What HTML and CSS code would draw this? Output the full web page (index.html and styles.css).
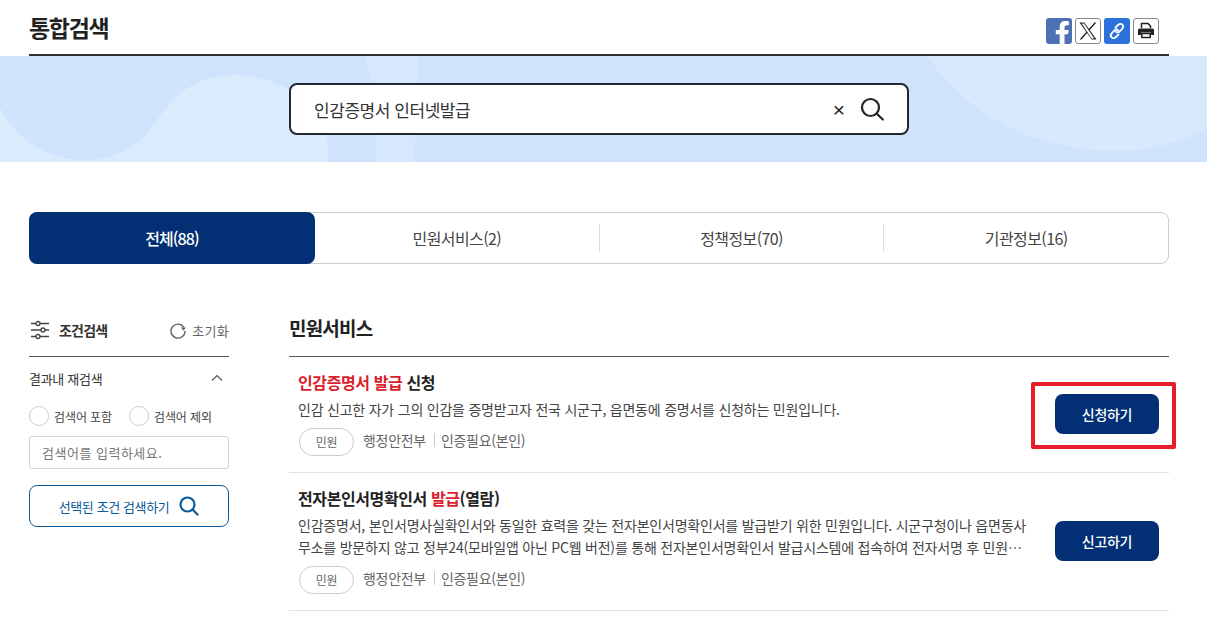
FILE: index.html
```html
<!DOCTYPE html>
<html lang="ko">
<head>
    <meta charset="UTF-8">
    <meta name="viewport" content="width=device-width, initial-scale=1.0">
    <title>통합검색</title>
    <link rel="stylesheet" href="styles.css">
</head>
<body>
    <div class="page-head">
        <h1>통합검색</h1>
        <div class="share">
            <span class="share-btn fb">
                <svg width="26" height="26" viewBox="0 0 26 26"><path d="M18.500 26V16.200h3.500l.7-4.200h-4.200V9.500c0-1.300.6-2.300 2.400-2.300h2V3.400c-.6-.1-2-.3-3.500-.3-3.400 0-5.700 2-5.700 5.800V12H9.800v4.200h3.900V26z" fill="#fff"/></svg>
            </span>
            <span class="share-btn line">
                <svg width="20" height="20" viewBox="0 0 20 20"><path d="M1.500 1.500h4.800l12.200 17h-4.800zM3.700 2.600l9.900 14.800h2.700L6 2.600z" fill="#222" fill-rule="evenodd"/><path d="M17.500 1.500 11 8.800M9 11.200l-6.500 7.300" stroke="#222" stroke-width="1.300" fill="none"/></svg>
            </span>
            <span class="share-btn link">
                <svg width="20" height="20" viewBox="0 0 20 20" fill="none" stroke="#fff" stroke-width="1.800" stroke-linecap="round"><path d="M8.500 6.500 11 4c1.500-1.400 3.300-1.300 4.400-.3 1.100 1.100 1 2.900-.3 4.200l-2.300 2.400c-1.300 1.300-3 1.300-4 .3"/><path d="M11.500 13.500 9 16c-1.500 1.400-3.300 1.300-4.400.3-1.100-1.100-1-2.900.3-4.200l2.300-2.400c1.300-1.300 3-1.300 4-.3"/></svg>
            </span>
            <span class="share-btn line">
                <svg width="20" height="20" viewBox="0 0 20 20"><path d="M5.500 7V2.500h6.500l2.500 2.500v2" fill="none" stroke="#222" stroke-width="1.500"/><path d="M3.500 7.500h13a1.500 1.500 0 0 1 1.500 1.500v5h-3v-2.500H5V14H2V9a1.500 1.500 0 0 1 1.500-1.500z" fill="#222"/><path d="M5.800 12.500h8.400v4h-8.400z" fill="none" stroke="#222" stroke-width="1.500"/></svg>
            </span>
        </div>
    </div>

    <div class="hero">
        <svg class="hero-bg" width="1207" height="106" viewBox="0 0 1207 106">
            <path d="M0 52C18 85 48 104 85 104c35 0 60-19 75-44 18-28 45-41 75-41 55 0 100 41 93 87H0z" fill="#daebfe"/>
            <path d="M365 0c7 30 13 70 10 106h38c5-36 7-76 4-106z" fill="#d5e8fd"/>
            <path d="M927 0c50 72 125 95 190 95 35 0 65-10 90-23V0z" fill="#d8e9fd"/>
        </svg>
        <div class="search-box">
            <span class="search-text">인감증명서 인터넷발급</span>
            <span class="search-clear">×</span>
            <svg width="24" height="24" viewBox="0 0 24 24" fill="none" stroke="#222" stroke-width="2.200" stroke-linecap="round"><circle cx="10.500" cy="10.500" r="8.500"/><path d="M16.800 16.800l6 5.700"/></svg>
        </div>
    </div>

    <div class="tabs">
        <div class="tab active">전체(88)</div>
        <div class="tab">민원서비스(2)</div>
        <div class="tab">정책정보(70)</div>
        <div class="tab">기관정보(16)</div>
    </div>

    <div class="content">
        <aside class="side">
            <div class="side-head">
                <svg width="20" height="20" viewBox="0 0 20 20" fill="none" stroke="#444" stroke-width="1.300"><path d="M1 3.500h5M10 3.500h9M1 10h10M15 10h4M1 16.500h5M10 16.500h9"/><circle cx="8" cy="3.500" r="2"/><circle cx="13" cy="10" r="2"/><circle cx="8" cy="16.500" r="2"/></svg>
                <strong>조건검색</strong>
                <span class="reset">
                    <svg width="18" height="18" viewBox="0 0 18 18" fill="none" stroke="#666" stroke-width="1.400"><path d="M15 6.500A7 7 0 1 0 16 10"/><path d="M16.800 6.500h-5l2.800 3.200z" fill="#666" stroke="none"/></svg>
                    초기화
                </span>
            </div>
            <div class="side-title">
                <span>결과내 재검색</span>
                <svg width="12" height="8" viewBox="0 0 12 8" fill="none" stroke="#555" stroke-width="1.200"><path d="M1 6.500l5-5 5 5"/></svg>
            </div>
            <div class="radios">
                <label class="radio"><i></i>검색어 포함</label>
                <label class="radio"><i></i>검색어 제외</label>
            </div>
            <div class="side-input">검색어를 입력하세요.</div>
            <div class="side-btn">
                선택된 조건 검색하기
                <svg width="20" height="20" viewBox="0 0 20 20" fill="none" stroke="#0a5a9c" stroke-width="2.200" stroke-linecap="round"><circle cx="8.500" cy="8.500" r="7"/><path d="M13.500 13.500l5 5"/></svg>
            </div>
        </aside>

        <main class="main">
            <h2>민원서비스</h2>
            <div class="item item-first">
                <div class="item-body">
                    <h3><em>인감증명서 발급</em> 신청</h3>
                    <p>인감 신고한 자가 그의 인감을 증명받고자 전국 시군구, 읍면동에 증명서를 신청하는 민원입니다.</p>
                    <div class="meta">
                        <span class="tag">민원</span>
                        <span>행정안전부</span>
                        <span class="meta-sep">인증필요(본인)</span>
                    </div>
                </div>
                <div class="action">
                    <span class="mark"></span>
                    <a class="btn">신청하기</a>
                </div>
            </div>
            <div class="item item-second">
                <div class="item-body">
                    <h3>전자본인서명확인서 <em>발급</em>(열람)</h3>
                    <p>인감증명서, 본인서명사실확인서와 동일한 효력을 갖는 전자본인서명확인서를 발급받기 위한 민원입니다. 시군구청이나 읍면동사무소를 방문하지 않고 정부24(모바일앱 아닌 PC웹 버전)를 통해 전자본인서명확인서 발급시스템에 접속하여 전자서명 후 민원…</p>
                    <div class="meta">
                        <span class="tag">민원</span>
                        <span>행정안전부</span>
                        <span class="meta-sep">인증필요(본인)</span>
                    </div>
                </div>
                <div class="action">
                    <a class="btn">신고하기</a>
                </div>
            </div>
        </main>
    </div>
</body>
</html>
```

FILE: styles.css
```css
* {
    box-sizing: border-box;
}

html, body {
    height: 621px;
    overflow: hidden;
}

body {
    margin: 0;
    background: #fff;
    color: #222;
    font-family: "Noto Sans CJK KR", "Noto Sans", sans-serif;
}

.page-head {
    margin: 0 38px 0 29px;
    height: 56px;
    padding-right: 10px;
    border-bottom: 2px solid #2b3037;
    display: flex;
    justify-content: space-between;
    align-items: flex-start;
}

.page-head h1 {
    margin: 9px 0 0;
    font-size: 23px;
    line-height: 36px;
    letter-spacing: -1.3px;
    font-weight: 700;
}

.share {
    margin-top: 18px;
    display: flex;
    gap: 3px;
}

.share-btn {
    width: 26px;
    height: 26px;
    border-radius: 3px;
    display: flex;
    align-items: center;
    justify-content: center;
    overflow: hidden;
}

.share-btn.fb {
    background-color: #4e71b5;
}

.share-btn.link {
    background-color: #2d72dc;
}

.share-btn.line {
    border: 1px solid #8a8a8a;
    background-color: #fff;
}

.hero {
    position: relative;
    height: 106px;
    background-color: #cfe4fc;
    padding: 27px 0 0 289px;
    overflow: hidden;
}

.hero-bg {
    position: absolute;
    top: 0;
    left: 0;
}

.search-box {
    position: relative;
    width: 620px;
    height: 52px;
    padding: 0 23px 0 23px;
    background-color: #fff;
    border: 2px solid #23272e;
    border-radius: 8px;
    display: flex;
    align-items: center;
}

.search-text {
    flex: 1;
    font-size: 17px;
    letter-spacing: -0.45px;
    color: #333;
}

.search-clear {
    margin-right: 15px;
    font-family: "Liberation Sans", sans-serif;
    font-size: 21px;
    line-height: 1;
    color: #222;
}

.tabs {
    margin: 50px 38px 0 29px;
    height: 52px;
    border: 1px solid #ccc;
    border-radius: 8px;
    display: flex;
    align-items: center;
}

.tab {
    flex: 1;
    height: 28px;
    line-height: 28px;
    text-align: center;
    font-size: 16px;
    letter-spacing: -0.6px;
    color: #444;
    border-left: 1px solid #ddd;
}

.tab.active {
    flex: 0 0 286px;
    height: 52px;
    line-height: 52px;
    margin: -1px 0 -1px -1px;
    border: 0;
    border-radius: 8px;
    background-color: #033075;
    color: #fff;
    font-weight: 500;
    letter-spacing: -0.9px;
}

.tab.active + .tab {
    border-left: 0;
}

.content {
    margin: 48px 38px 0 29px;
    display: flex;
    gap: 60px;
}

.side {
    width: 200px;
    flex: none;
}

.side-head {
    height: 45px;
    border-bottom: 1px solid #555;
    display: flex;
    align-items: center;
    padding: 0 0 8px 1px;
}

.side-head strong {
    margin-left: 9px;
    font-size: 14px;
    font-weight: 700;
    letter-spacing: -0.8px;
    color: #333;
}

.reset {
    margin-left: auto;
    display: flex;
    align-items: center;
    gap: 5px;
    font-size: 13px;
    letter-spacing: 0.3px;
    color: #666;
}

.side-title {
    height: 42px;
    padding-right: 6px;
    display: flex;
    justify-content: space-between;
    align-items: center;
    font-size: 13px;
    letter-spacing: -0.3px;
    color: #333;
}

.radios {
    margin-top: 7px;
    display: flex;
    gap: 17px;
}

.radio {
    display: flex;
    align-items: center;
    gap: 5px;
    font-size: 12px;
    letter-spacing: -0.1px;
    color: #444;
}

.radio i {
    width: 20px;
    height: 20px;
    border: 1px solid #ccc;
    border-radius: 50%;
}

.side-input {
    margin-top: 10px;
    height: 33px;
    padding-left: 12px;
    border: 1px solid #d5d5d5;
    border-radius: 3px;
    font-size: 13px;
    line-height: 31px;
    letter-spacing: 0.5px;
    color: #777;
}

.side-btn {
    margin-top: 16px;
    height: 42px;
    border: 1px solid #0a5a9c;
    border-radius: 8px;
    display: flex;
    align-items: center;
    justify-content: center;
    gap: 10px;
    font-size: 13px;
    letter-spacing: -0.4px;
    color: #0a5a9c;
}

.main {
    flex: 1;
    min-width: 0;
}

.main h2 {
    margin: 0;
    height: 45px;
    border-bottom: 1px solid #555;
    font-size: 19px;
    line-height: 32px;
    letter-spacing: -0.8px;
    font-weight: 700;
    color: #222;
}

.item {
    display: flex;
    align-items: center;
    padding: 0 10px 0 9px;
    border-bottom: 1px solid #e2e2e2;
}

.item-first {
    height: 116px;
}

.item-second {
    height: 138px;
}

.item-body {
    flex: 1;
    align-self: flex-start;
    min-width: 0;
    padding: 13px 27px 0 0;
}

.item h3 {
    margin: 0;
    font-size: 16px;
    line-height: 24px;
    letter-spacing: -0.4px;
    font-weight: 700;
    color: #222;
}

.item h3 em {
    font-style: normal;
    color: #dc1e2d;
}

.item p {
    margin: 4px 0 0;
    font-size: 14px;
    line-height: 22px;
    letter-spacing: -0.22px;
    color: #444;
}

.meta {
    margin-top: 8px;
    padding-left: 1px;
    display: flex;
    align-items: flex-start;
    font-size: 14px;
    line-height: 24px;
    letter-spacing: -0.3px;
    color: #666;
}

.tag {
    width: 55px;
    height: 28px;
    margin-right: 9px;
    border: 1px solid #ccc;
    border-radius: 14px;
    text-align: center;
    line-height: 26px;
    font-size: 12px;
}

.meta-sep {
    margin-left: 8px;
    padding-left: 7px;
    position: relative;
}

.meta-sep::before {
    content: "";
    position: absolute;
    left: 0;
    top: 5px;
    bottom: 5px;
    width: 1px;
    background-color: #ccc;
}

.action {
    position: relative;
    flex: none;
    margin-top: -2px;
}

.btn {
    display: block;
    width: 104px;
    height: 40px;
    border-radius: 8px;
    background-color: #033075;
    color: #fff;
    text-align: center;
    font-size: 14px;
    line-height: 40px;
    font-weight: 500;
    letter-spacing: -0.3px;
}

.mark {
    position: absolute;
    left: -24px;
    top: -12px;
    width: 145px;
    height: 67px;
    border: 4px solid #e61e2c;
    border-radius: 2px;
}
```
